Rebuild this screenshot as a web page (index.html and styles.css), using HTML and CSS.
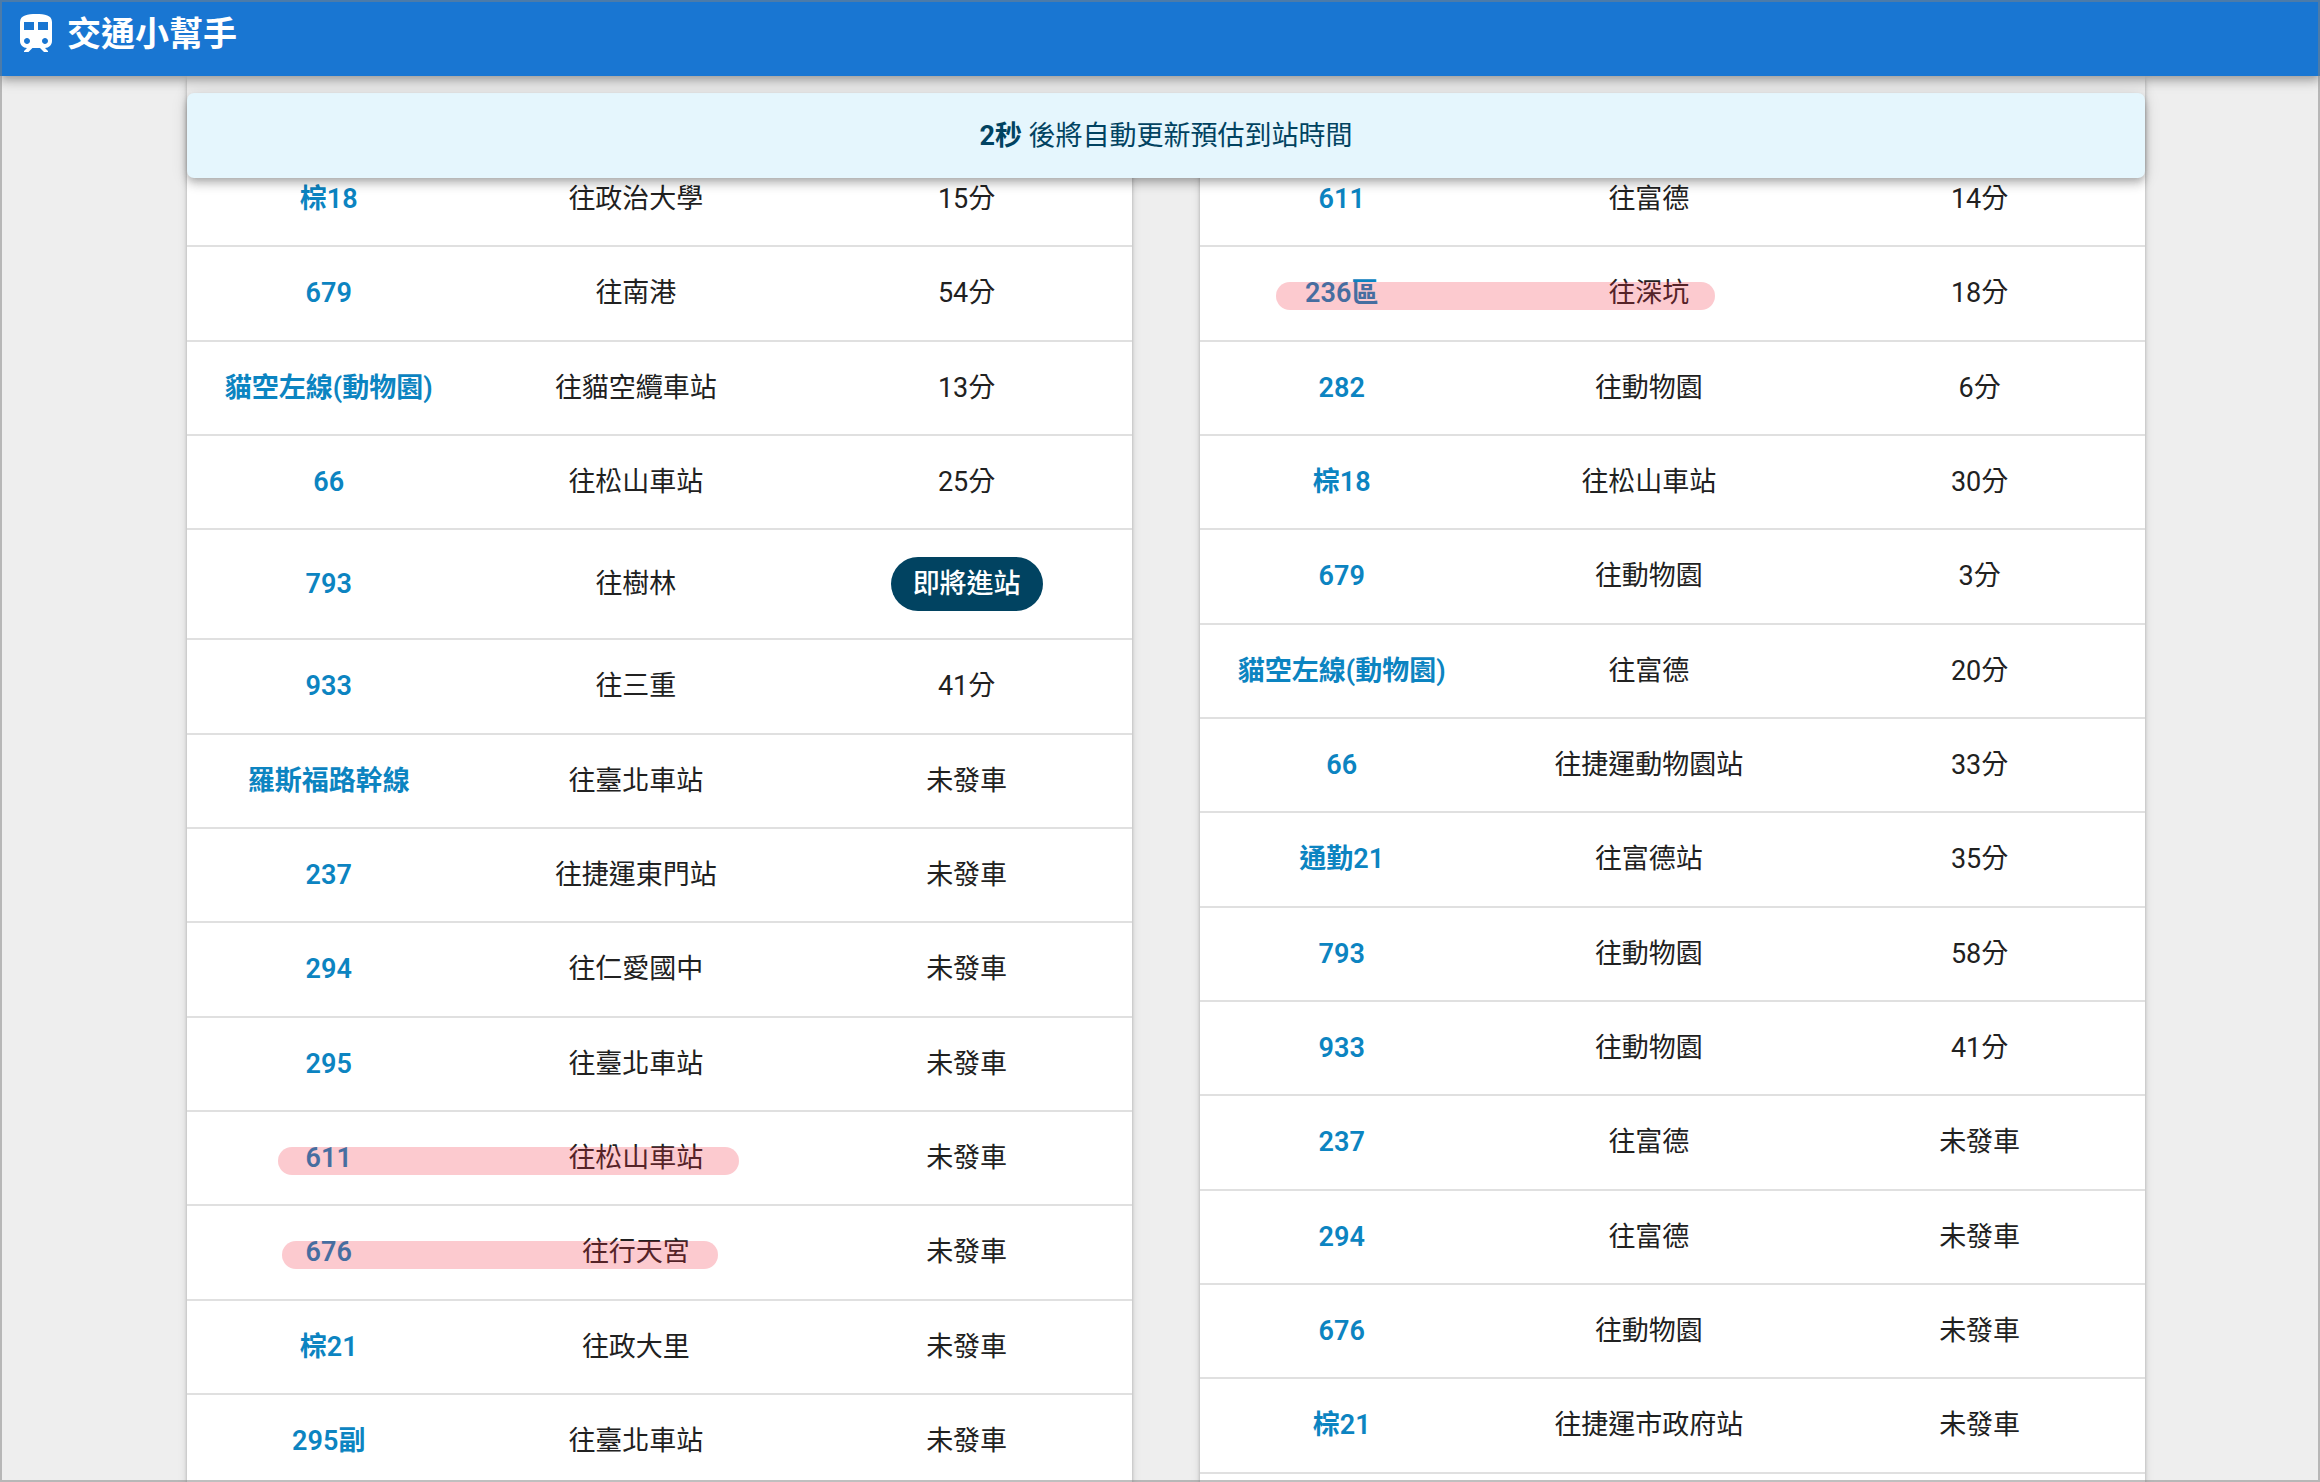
FILE: index.html
```html
<!DOCTYPE html>
<html lang="zh-Hant">
<head>
<meta charset="utf-8">
<meta name="viewport" content="width=device-width, initial-scale=1">
<title>交通小幫手</title>
<link rel="stylesheet" href="styles.css">
</head>
<body>
<header class="app-bar">
  <svg class="logo" viewBox="0 0 24 24" aria-hidden="true"><path d="M12 2c-4 0-8 .5-8 4v9.500C4 17.430 5.570 19 7.500 19L6 20.500v.5h2.230l2-2H14l2 2h2v-.5L16.500 19c1.930 0 3.500-1.570 3.500-3.500V6c0-3.500-3.580-4-8-4zM7.500 17c-.83 0-1.500-.67-1.500-1.500S6.670 14 7.500 14s1.500.67 1.500 1.500S8.330 17 7.500 17zm3.500-7H6V6h5v4zm2 0V6h5v4h-5zm3.500 7c-.83 0-1.500-.67-1.500-1.500s.67-1.500 1.500-1.500 1.500.67 1.500 1.500-.67 1.500-1.500 1.500z"/></svg>
  <h1 class="title">交通小幫手</h1>
</header>
<main class="content">
  <div class="notice-bar">
    <p class="notice" role="status"><strong>2秒</strong> 後將自動更新預估到站時間</p>
  </div>
  <div class="boards">
    <section class="card" aria-label="去程">
      <table class="board">
        <colgroup><col class="col-route"><col class="col-dest"><col class="col-time"></colgroup>
        <tbody>
          <tr><td><a href="#">棕18</a></td><td>往政治大學</td><td>15分</td></tr>
          <tr><td><a href="#">679</a></td><td>往南港</td><td>54分</td></tr>
          <tr><td><a href="#">貓空左線(動物園)</a></td><td>往貓空纜車站</td><td>13分</td></tr>
          <tr><td><a href="#">66</a></td><td>往松山車站</td><td>25分</td></tr>
          <tr><td><a href="#">793</a></td><td>往樹林</td><td><span class="chip">即將進站</span></td></tr>
          <tr><td><a href="#">933</a></td><td>往三重</td><td>41分</td></tr>
          <tr><td><a href="#">羅斯福路幹線</a></td><td>往臺北車站</td><td>未發車</td></tr>
          <tr><td><a href="#">237</a></td><td>往捷運東門站</td><td>未發車</td></tr>
          <tr><td><a href="#">294</a></td><td>往仁愛國中</td><td>未發車</td></tr>
          <tr><td><a href="#">295</a></td><td>往臺北車站</td><td>未發車</td></tr>
          <tr class="marked marked-long"><td><a href="#">611</a></td><td>往松山車站</td><td>未發車</td></tr>
          <tr class="marked marked-short"><td><a href="#">676</a></td><td>往行天宮</td><td>未發車</td></tr>
          <tr><td><a href="#">棕21</a></td><td>往政大里</td><td>未發車</td></tr>
          <tr><td><a href="#">295副</a></td><td>往臺北車站</td><td>未發車</td></tr>
        </tbody>
      </table>
    </section>
    <section class="card" aria-label="返程">
      <table class="board">
        <colgroup><col class="col-route"><col class="col-dest"><col class="col-time"></colgroup>
        <tbody>
          <tr><td><a href="#">611</a></td><td>往富德</td><td>14分</td></tr>
          <tr class="marked marked-wide"><td><a href="#">236區</a></td><td>往深坑</td><td>18分</td></tr>
          <tr><td><a href="#">282</a></td><td>往動物園</td><td>6分</td></tr>
          <tr><td><a href="#">棕18</a></td><td>往松山車站</td><td>30分</td></tr>
          <tr><td><a href="#">679</a></td><td>往動物園</td><td>3分</td></tr>
          <tr><td><a href="#">貓空左線(動物園)</a></td><td>往富德</td><td>20分</td></tr>
          <tr><td><a href="#">66</a></td><td>往捷運動物園站</td><td>33分</td></tr>
          <tr><td><a href="#">通勤21</a></td><td>往富德站</td><td>35分</td></tr>
          <tr><td><a href="#">793</a></td><td>往動物園</td><td>58分</td></tr>
          <tr><td><a href="#">933</a></td><td>往動物園</td><td>41分</td></tr>
          <tr><td><a href="#">237</a></td><td>往富德</td><td>未發車</td></tr>
          <tr><td><a href="#">294</a></td><td>往富德</td><td>未發車</td></tr>
          <tr><td><a href="#">676</a></td><td>往動物園</td><td>未發車</td></tr>
          <tr><td><a href="#">棕21</a></td><td>往捷運市政府站</td><td>未發車</td></tr>
        </tbody>
      </table>
    </section>
  </div>
</main>
</body>
</html>
```
FILE: styles.css
```css
* {
  box-sizing: border-box;
}

body {
  margin: 0;
  height: 100vh;
  overflow: hidden;
  display: flex;
  flex-direction: column;
  background: #eeeeee;
  color: #212121;
  font-family: Roboto, "Noto Sans CJK TC", sans-serif;
  font-size: 27px;
  line-height: 1.42;
}

/* Thin frame round the whole window */
body::after {
  content: "";
  position: fixed;
  inset: 0;
  z-index: 10;
  border: 2px solid rgba(128, 128, 128, 0.5);
  pointer-events: none;
}

.app-bar {
  position: relative;
  z-index: 3;
  flex: none;
  display: flex;
  align-items: center;
  gap: 7px;
  padding: 10px 12px 18px;
  background: #1976d2;
  color: #ffffff;
  box-shadow: 0 3px 7px -2px rgba(0, 0, 0, 0.2), 0 7px 8px 0 rgba(0, 0, 0, 0.14), 0 2px 17px 0 rgba(0, 0, 0, 0.12);
}

.logo {
  width: 48px;
  height: 48px;
  fill: currentColor;
}

.title {
  margin: 0;
  font-size: 34px;
  font-weight: 700;
  line-height: 48px;
}

.content {
  flex: 1;
  min-height: 0;
  display: grid;
  grid-template-columns: minmax(0, 1fr);
  padding: 0 175px 0 187px;
}

.notice-bar,
.boards {
  grid-area: 1 / 1;
}

.notice-bar {
  z-index: 2;
  align-self: start;
  padding-top: 17px;
  background: linear-gradient(#eeeeee 50px, transparent 50px);
}

.notice {
  margin: 0;
  padding: 24px 24px 23px;
  border-radius: 7px;
  background: #e5f6fd;
  color: #014361;
  text-align: center;
  box-shadow: 0 3px 7px -2px rgba(0, 0, 0, 0.2), 0 7px 8px 0 rgba(0, 0, 0, 0.14), 0 2px 17px 0 rgba(0, 0, 0, 0.12);
}

.boards {
  display: grid;
  grid-template-columns: 1fr 1fr;
  gap: 68px;
}

.card {
  padding-top: 77px;
  background: #ffffff;
  box-shadow: 0 3px 5px -2px rgba(0, 0, 0, 0.2), 0 3px 3px 0 rgba(0, 0, 0, 0.14), 0 2px 9px 0 rgba(0, 0, 0, 0.12);
}

.board {
  width: 100%;
  table-layout: fixed;
  border-collapse: separate;
  border-spacing: 0;
}

.col-route {
  width: 30%;
}

.col-dest,
.col-time {
  width: 35%;
}

.board td {
  padding: 27px 0;
  border-bottom: 2px solid #e0e0e0;
  text-align: center;
  white-space: nowrap;
}

.board a {
  color: #0c84c1;
  font-weight: 600;
  text-decoration: none;
}

.chip {
  display: block;
  width: fit-content;
  margin: 0 auto;
  padding: 0 22px;
  border-radius: 27px;
  background: #014361;
  color: #ffffff;
  font-weight: 500;
  line-height: 54px;
}

/* Highlighter strokes drawn over a row */
.marked {
  position: relative;
}

.marked::after {
  content: "";
  position: absolute;
  top: 35px;
  height: 28px;
  border-radius: 14px;
  background: rgba(244, 43, 63, 0.25);
  pointer-events: none;
}

.marked-long::after {
  left: 91px;
  width: 461px;
}

.marked-short::after {
  left: 95px;
  width: 436px;
}

.marked-wide::after {
  left: 76px;
  width: 439px;
}
```
